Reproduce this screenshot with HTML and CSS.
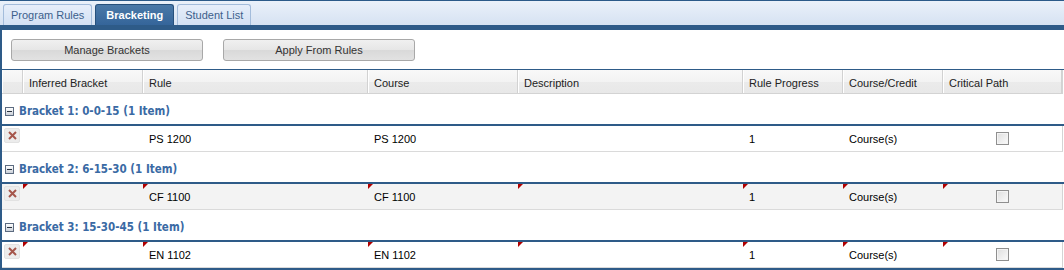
FILE: index.html
```html
<!DOCTYPE html>
<html lang="en">
<head>
    <meta charset="UTF-8">
    <title>Bracketing</title>
    <link rel="stylesheet" href="styles.css">
</head>
<body>
    <div class="tabstrip">
        <div class="tab">Program Rules</div>
        <div class="tab active">Bracketing</div>
        <div class="tab">Student List</div>
    </div>
    <div class="tabbar"></div>

    <div class="panel">
        <div class="toolbar">
            <button class="btn">Manage Brackets</button>
            <button class="btn">Apply From Rules</button>
        </div>

        <div class="grid">
            <div class="row head">
                <div class="cell"></div>
                <div class="cell">Inferred Bracket</div>
                <div class="cell">Rule</div>
                <div class="cell">Course</div>
                <div class="cell">Description</div>
                <div class="cell">Rule Progress</div>
                <div class="cell">Course/Credit</div>
                <div class="cell">Critical Path</div>
            </div>

            <div class="group"><span class="toggle"></span>Bracket 1: 0-0-15 (1 Item)</div>
            <div class="row item">
                <div class="cell"><span class="del"><svg width="9" height="9" viewBox="0 0 9 9"><path d="M1 1L8 8M8 1L1 8" /></svg></span></div>
                <div class="cell"></div>
                <div class="cell">PS 1200</div>
                <div class="cell">PS 1200</div>
                <div class="cell"></div>
                <div class="cell">1</div>
                <div class="cell">Course(s)</div>
                <div class="cell center"><span class="check"></span></div>
            </div>

            <div class="group"><span class="toggle"></span>Bracket 2: 6-15-30 (1 Item)</div>
            <div class="row item alt">
                <div class="cell"><span class="del"><svg width="9" height="9" viewBox="0 0 9 9"><path d="M1 1L8 8M8 1L1 8" /></svg></span></div>
                <div class="cell dirty"></div>
                <div class="cell dirty">CF 1100</div>
                <div class="cell dirty">CF 1100</div>
                <div class="cell dirty"></div>
                <div class="cell dirty">1</div>
                <div class="cell dirty">Course(s)</div>
                <div class="cell dirty center"><span class="check"></span></div>
            </div>

            <div class="group"><span class="toggle"></span>Bracket 3: 15-30-45 (1 Item)</div>
            <div class="row item">
                <div class="cell"><span class="del"><svg width="9" height="9" viewBox="0 0 9 9"><path d="M1 1L8 8M8 1L1 8" /></svg></span></div>
                <div class="cell dirty"></div>
                <div class="cell dirty">EN 1102</div>
                <div class="cell dirty">EN 1102</div>
                <div class="cell dirty"></div>
                <div class="cell dirty">1</div>
                <div class="cell dirty">Course(s)</div>
                <div class="cell dirty center"><span class="check"></span></div>
            </div>
            <div class="grid-end"></div>
        </div>
    </div>
</body>
</html>
```

FILE: styles.css
```css
body {
    margin: 0;
    font-family: "Liberation Sans", Arial, sans-serif;
    font-size: 11px;
    color: #000;
    background-color: #ffffff;
    overflow: hidden;
}
.tabstrip {
    display: flex;
    align-items: flex-end;
    gap: 3px;
    height: 24px;
    padding-left: 3px;
    border-top: 1px solid #2b5a89;
    background: linear-gradient(#eaf1fa, #d6e2f2);
}
.tab {
    height: 20px;
    line-height: 21px;
    padding: 0 7px;
    border: 1px solid #a3bcdb;
    border-bottom: none;
    border-radius: 3px 3px 0 0;
    background: linear-gradient(#e6eefa, #d3e1f4);
    color: #3d5f8c;
    font-size: 11px;
}
.tab.active {
    padding: 0 10px;
    background: linear-gradient(#4a79a8, #35659a);
    border-color: #26507c;
    color: #ffffff;
    font-weight: bold;
}
.tabbar {
    height: 5px;
    background-color: #2e5b88;
}
.panel {
    border-left: 2px solid #2e5b88;
}
.toolbar {
    display: flex;
    gap: 20px;
    padding: 9px 9px 8px;
}
.btn {
    width: 192px;
    height: 22px;
    padding: 0;
    border: 1px solid #a8a8a8;
    border-radius: 3px;
    background: linear-gradient(#f0f0f0 0%, #e6e6e6 50%, #d9d9d9 51%, #e2e2e2 100%);
    color: #333;
    font-family: "Liberation Sans", Arial, sans-serif;
    font-size: 11px;
}
.grid {
    border-top: 1px solid #2e5b88;
}
.row {
    display: grid;
    grid-template-columns: 21px 120px 225px 150px 225px 100px 100px 119px;
    border-right: 1px solid #d4d4d4;
    width: 1060px;
}
.cell {
    position: relative;
    padding: 0 6px;
    white-space: nowrap;
    overflow: hidden;
}
.head {
    height: 23px;
    line-height: 27px;
    border-bottom: 1px solid #d3d3d3;
    background: linear-gradient(#f9f9f9 0%, #f3f3f3 50%, #ebebeb 51%, #e8e8e8 100%);
    color: #222;
}
.head .cell {
    border-right: 1px solid #d2d2d2;
    box-shadow: inset 1px 0 #ffffff;
}
.group {
    display: flex;
    align-items: center;
    height: 26px;
    padding: 4px 0 0 3px;
    border-bottom: 2px solid #2e5b88;
    color: #3a6aa4;
    font-family: "DejaVu Sans Condensed", "DejaVu Sans", Verdana, sans-serif;
    font-size: 11.5px;
    font-weight: bold;
}
.toggle {
    position: relative;
    box-sizing: border-box;
    width: 9px;
    height: 9px;
    margin-right: 5px;
    border: 1px solid #5c6b80;
    background: linear-gradient(#ffffff, #c9cfd8);
}
.toggle::after {
    content: "";
    position: absolute;
    left: 1px;
    right: 1px;
    top: 3px;
    height: 1px;
    background-color: #2a3340;
}
.item {
    height: 25px;
    line-height: 26px;
    border-bottom: 1px solid #dadada;
}
.item.alt {
    background-color: #f3f3f3;
}
.item .cell:first-child {
    padding: 0;
}
.del {
    display: flex;
    align-items: center;
    justify-content: center;
    box-sizing: border-box;
    width: 16px;
    height: 15px;
    margin: 2px 0 0 2px;
    border: 1px solid #e2e2e2;
    border-radius: 2px;
    background-color: #ececec;
}
.del svg {
    stroke: #a5564b;
    stroke-width: 2;
}
.dirty::before {
    content: "";
    position: absolute;
    left: 0;
    top: 0;
    border-top: 5px solid #b00000;
    border-right: 5px solid transparent;
}
.center {
    display: flex;
    justify-content: center;
    align-items: center;
}
.check {
    box-sizing: border-box;
    width: 13px;
    height: 13px;
    border: 1px solid #8f8f8f;
    background: linear-gradient(135deg, #dedede, #fbfbfb);
    box-shadow: inset 0 0 0 1px #f4f4f4;
}
.grid-end {
    height: 3px;
    background-color: #2e5b88;
}
```
